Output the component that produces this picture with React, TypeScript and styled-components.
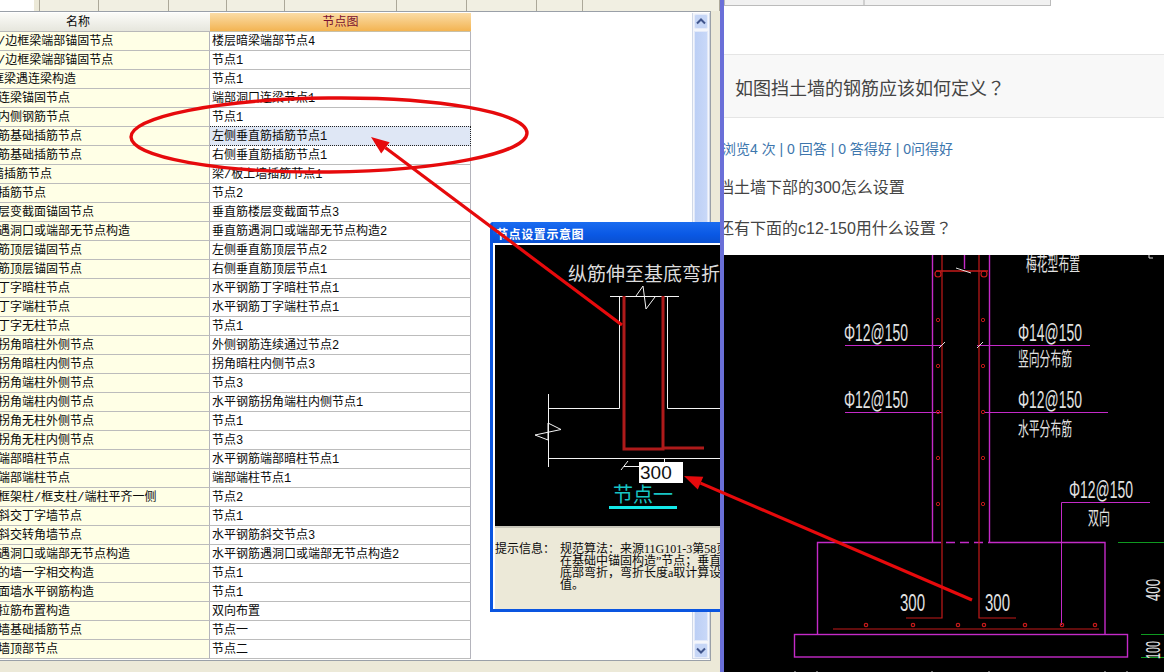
import React from "react";
import styled, { createGlobalStyle } from "styled-components";

const Global = createGlobalStyle`
  html, body { margin: 0; padding: 0; background: #fff; }
  #root { width: 1164px; height: 672px; overflow: hidden; }
  * { box-sizing: border-box; }
`;

const grid = `"Liberation Mono", "Noto Sans CJK SC", monospace`;
const cjk = `"Liberation Serif", "Noto Sans CJK SC", serif`;
const web = `"Liberation Sans", "Noto Sans CJK SC", sans-serif`;

const Page = styled.div`
  position: relative;
  display: flex;
  width: 1164px;
  height: 672px;
  overflow: hidden;
  background: #fff;
`;

const LeftPane = styled.div`
  position: relative;
  width: 720px;
  height: 672px;
  flex: none;
  overflow: hidden;
  background: #ece9d8;
  display: flex;
  flex-direction: column;
  font: 12px/19px ${grid};
  color: #0a0a0a;
`;

const TabStrip = styled.div`
  display: flex;
  height: 11px;
  flex: none;
  background: #ece9d8;
`;

const TabStub = styled.div<{ $w: number; $active?: boolean }>`
  width: ${(p) => p.$w}px;
  flex: none;
  overflow: hidden;
  border-right: 1px solid #aca899;
  background: ${(p) => (p.$active ? "linear-gradient(90deg, #fff 88%, #ece9d8 88%)" : "#f1efe2")};
`;

const TabLabel = styled.div`
  margin-top: -16px;
  line-height: 18px;
  white-space: nowrap;
  overflow: hidden;
`;

const GridFrame = styled.div`
  display: flex;
  width: 711px;
  height: 650px;
  flex: none;
  border: 1px solid #9aa0a8;
  border-left: 0;
  background: #fff;
  padding-top: 1px;
`;

const Table = styled.div`
  flex: 1;
  min-width: 0;
  display: flex;
  flex-direction: column;
`;

const Row = styled.div`
  display: flex;
  height: 19px;
  flex: none;
`;

const HeadName = styled.div`
  width: 210px;
  flex: none;
  text-align: center;
  padding-right: 54px;
  font-size: 12px;
  line-height: 20px;
  overflow: hidden;
  background: linear-gradient(#fbfbf8, #e6e6dd);
  border-bottom: 1px solid #b8b8b8;
`;

const HeadNode = styled.div`
  width: 261px;
  flex: none;
  text-align: center;
  line-height: 20px;
  overflow: hidden;
  color: #7a1030;
  background: linear-gradient(#fbdca6, #f3b452);
  border-bottom: 1px solid #c8c0a8;
`;

const NameCell = styled.div<{ $hiddenHalf?: boolean }>`
  width: 210px;
  flex: none;
  overflow: hidden;
  white-space: nowrap;
  background: #ffffe6;
  border-bottom: 1px solid #bcbcbc;
  border-right: 1px solid #b4b4bc;
  line-height: 20px;
  text-indent: ${(p) => (p.$hiddenHalf ? "-8px" : "-2px")};
`;

const NodeCell = styled.div<{ $selected?: boolean }>`
  width: 261px;
  flex: none;
  overflow: hidden;
  white-space: nowrap;
  padding-left: 2px;
  line-height: 20px;
  background: ${(p) => (p.$selected ? "#dfe7f5" : "#fff")};
  border-bottom: 1px ${(p) => (p.$selected ? "dotted #222" : "solid #bcbcbc")};
  border-right: 1px ${(p) => (p.$selected ? "dotted #222" : "solid #b4b4bc")};
  ${(p) => (p.$selected ? "border-top: 1px dotted #222; margin-top: -1px; height: 20px;" : "")}
`;

const ScrollBar = styled.div`
  width: 18px;
  flex: none;
  margin: 0 0 1px 0;
  padding: 0 1px;
  border: 1px solid #d0d8e8;
  border-top: 0;
  display: flex;
  flex-direction: column;
  gap: 2px;
  background: #f4f6fb;
  padding-top: 1px;
`;

const ScrollButton = styled.div`
  height: 15px;
  flex: none;
  display: flex;
  align-items: center;
  justify-content: center;
  background: #c6d6f6;
  border: 1px solid #e6ecfa;
  border-radius: 2px;
`;

const ScrollThumb = styled.div`
  flex: 1;
  background: linear-gradient(90deg, #bccff5, #c8d8f8);
  border: 1px solid #e2e9f9;
`;

const Dialog = styled.div`
  position: absolute;
  left: 490px;
  top: 222px;
  width: 260px;
  height: 390px;
  display: flex;
  flex-direction: column;
  background: #0a55e0;
  padding: 0 3px 3px 3px;
  border-radius: 3px 3px 0 0;
`;

const DialogTitle = styled.div`
  height: 21px;
  flex: none;
  padding: 3px 0 0 3px;
  font: bold 12px/18px "Noto Sans CJK SC", sans-serif;
  letter-spacing: 0.6px;
  color: #fff;
  background: linear-gradient(#1a6cf0, #0a58e4 60%, #0a50d0);
`;

const DialogBody = styled.div`
  flex: 1;
  display: flex;
  flex-direction: column;
  min-height: 0;
  border-left: 2px solid #fff;
  border-top: 2px solid #fff;
  background: #ece9d8;
`;

const Canvas = styled.svg`
  display: block;
  width: 250px;
  height: 281px;
  flex: none;
  background: #000;
`;

const HintPanel = styled.div`
  flex: 1;
  display: flex;
  border-top: 2px solid #c8c6ba;
  padding-top: 15px;
  font: 12px/12px ${cjk};
  color: #0a0a0a;
  white-space: nowrap;
`;

const HintLabel = styled.div`
  width: 65px;
  flex: none;
`;

const Divider = styled.div`
  width: 4px;
  flex: none;
  background: #6a6fd8;
`;

const RightPane = styled.div`
  flex: 1;
  min-width: 0;
  height: 672px;
  display: flex;
  flex-direction: column;
  overflow: hidden;
  background: #fff;
  font-family: ${web};
`;

const TopTabs = styled.div`
  display: flex;
  width: 327px;
  height: 6px;
  flex: none;
  background: #f1f1f1;
  border: 1px solid #bbb;
  border-top: 0;
`;

const TopTab = styled.div`
  width: 140px;
  flex: none;
  border-right: 2px solid #d0d0d0;
`;

const QuestionBar = styled.div`
  margin-top: 48px;
  height: 64px;
  flex: none;
  display: flex;
  align-items: center;
  padding: 2px 0 0 11px;
  background: #f8f8f8;
  border-top: 1px solid #e5e5e5;
  border-bottom: 1px solid #e5e5e5;
  font-size: 18px;
  color: #444;
`;

const FullStop = styled.span`
  font-family: "Noto Sans CJK TC", sans-serif;
  line-height: 0;
`;

const Stats = styled.div`
  margin: 22px 0 0 -2px;
  height: 18px;
  flex: none;
  font-size: 14px;
  line-height: 18px;
  color: #3d76ad;
  white-space: nowrap;
`;

const BodyText = styled.div`
  margin: 19px 0 0 -6px;
  height: 22px;
  flex: none;
  font-size: 16px;
  line-height: 22px;
  color: #444;
  white-space: nowrap;
`;

const Cad = styled.svg`
  display: block;
  margin-top: 15px;
  width: 440px;
  height: 417px;
  flex: none;
  background: #000;
`;

const Annotations = styled.svg`
  position: absolute;
  left: 0;
  top: 0;
  width: 1164px;
  height: 672px;
  pointer-events: none;
`;

const rows: [string, string, boolean?][] = [
  ["/边框梁端部锚固节点", "楼层暗梁端部节点4"],
  ["/边框梁端部锚固节点", "节点1"],
  ["框梁遇连梁构造", "节点1", true],
  ["连梁锚固节点", "端部洞口连梁节点1"],
  ["内侧钢筋节点", "节点1"],
  ["筋基础插筋节点", "左侧垂直筋插筋节点1"],
  ["筋基础插筋节点", "右侧垂直筋插筋节点1"],
  ["墙插筋节点", "梁/板上墙插筋节点1", true],
  ["插筋节点", "节点2"],
  ["层变截面锚固节点", "垂直筋楼层变截面节点3"],
  ["遇洞口或端部无节点构造", "垂直筋遇洞口或端部无节点构造2"],
  ["筋顶层锚固节点", "左侧垂直筋顶层节点2"],
  ["筋顶层锚固节点", "右侧垂直筋顶层节点1"],
  ["丁字暗柱节点", "水平钢筋丁字暗柱节点1"],
  ["丁字端柱节点", "水平钢筋丁字端柱节点1"],
  ["丁字无柱节点", "节点1"],
  ["拐角暗柱外侧节点", "外侧钢筋连续通过节点2"],
  ["拐角暗柱内侧节点", "拐角暗柱内侧节点3"],
  ["拐角端柱外侧节点", "节点3"],
  ["拐角端柱内侧节点", "水平钢筋拐角端柱内侧节点1"],
  ["拐角无柱外侧节点", "节点1"],
  ["拐角无柱内侧节点", "节点3"],
  ["端部暗柱节点", "水平钢筋端部暗柱节点1"],
  ["端部端柱节点", "端部端柱节点1"],
  ["框架柱/框支柱/端柱平齐一侧", "节点2"],
  ["斜交丁字墙节点", "节点1"],
  ["斜交转角墙节点", "水平钢筋斜交节点3"],
  ["遇洞口或端部无节点构造", "水平钢筋遇洞口或端部无节点构造2"],
  ["的墙一字相交构造", "节点1"],
  ["面墙水平钢筋构造", "节点1"],
  ["拉筋布置构造", "双向布置"],
  ["墙基础插筋节点", "节点一"],
  ["墙顶部节点", "节点二"],
];

const tabWidths = [40, 59, 70, 58, 58, 112, 70, 70, 46, 137];

const CadLabel = ({ x, y, w, size = 23, children }: { x: number; y: number; w: number; size?: number; children: string }) => (
  <text
    x={x}
    y={y}
    fill="#e2e2e2"
    fontFamily='"Liberation Sans","Noto Sans CJK SC",sans-serif'
    fontSize={size}
    textLength={w}
    lengthAdjust="spacingAndGlyphs"
  >
    {children}
  </text>
);

const WallDots = ({ x }: { x: number }) => (
  <>
    {[320, 366, 412, 458, 504].map((y) => (
      <circle key={y} cx={x} cy={y} r={1.7} fill="none" stroke="#c01818" strokeWidth={1} />
    ))}
  </>
);

const Arrow = ({ x1, y1, x2, y2 }: { x1: number; y1: number; x2: number; y2: number }) => {
  const a = Math.atan2(y2 - y1, x2 - x1);
  const len = 18;
  const wid = 7;
  const bx = x2 - Math.cos(a) * len;
  const by = y2 - Math.sin(a) * len;
  const nx = -Math.sin(a) * wid;
  const ny = Math.cos(a) * wid;
  return (
    <>
      <line x1={x1} y1={y1} x2={bx} y2={by} stroke="#e60a0c" strokeWidth={3.2} />
      <polygon points={`${x2},${y2} ${bx + nx},${by + ny} ${bx - nx},${by - ny}`} fill="#e60a0c" />
    </>
  );
};

export default function App() {
  return (
    <Page>
      <Global />
      <LeftPane>
        <TabStrip>
          {tabWidths.map((w, i) => (
            <TabStub key={i} $w={w} $active={i === 0}>
              {i === 0 && <TabLabel>墙节点</TabLabel>}
            </TabStub>
          ))}
        </TabStrip>
        <GridFrame>
          <Table>
            <Row>
              <HeadName>名称</HeadName>
              <HeadNode>节点图</HeadNode>
            </Row>
            {rows.map(([name, node, half], i) => (
              <Row key={i}>
                <NameCell $hiddenHalf={half}>{name}</NameCell>
                <NodeCell $selected={i === 5}>{node}</NodeCell>
              </Row>
            ))}
          </Table>
          <ScrollBar>
            <ScrollButton>
              <svg width="10" height="7" viewBox="0 0 10 7">
                <path d="M1 5.5 L5 1.5 L9 5.5" fill="none" stroke="#40558c" strokeWidth="2" />
              </svg>
            </ScrollButton>
            <ScrollThumb />
            <ScrollButton>
              <svg width="10" height="7" viewBox="0 0 10 7">
                <path d="M1 1.5 L5 5.5 L9 1.5" fill="none" stroke="#40558c" strokeWidth="2" />
              </svg>
            </ScrollButton>
          </ScrollBar>
        </GridFrame>

        <Dialog>
          <DialogTitle>节点设置示意图</DialogTitle>
          <DialogBody>
            <Canvas viewBox="495 245 250 281">
              <text x="568" y="281" fill="#dcdcdc" fontFamily='"Noto Sans CJK SC",sans-serif' fontSize="19">
                纵筋伸至基底弯折
              </text>
              <g fill="none" stroke="#f4f4f4" strokeWidth="1">
                <path d="M610 296.5H679" />
                <path d="M619.5 296V408.5H548.5" />
                <path d="M667.5 296V408.5H745" />
                <path d="M548.5 394V467" />
                <path d="M548 458.5H745" />
                <path d="M561 429.5L535 435L548 440V423L561 429.5" />
                <path d="M636 296L643 286L646 309L655 297" />
                <path d="M624 466.5H640M621 470L628 461M664.5 458V463" />
              </g>
              <path d="M624 296V449H663V296M663 448H704" fill="none" stroke="#ae1a1a" strokeWidth="3" />
              <rect x="639" y="462" width="44" height="21" fill="#fff" />
              <text x="640" y="479" fill="#111" fontFamily='"Liberation Sans",sans-serif' fontSize="19">
                300
              </text>
              <text x="613" y="502" fill="#18c4c4" fontFamily='"Noto Sans CJK SC",sans-serif' fontSize="20">
                节点一
              </text>
              <rect x="609" y="506" width="68" height="3" fill="#14e8e8" />
            </Canvas>
            <HintPanel>
              <HintLabel>提示信息：</HintLabel>
              <div>
                规范算法：来源11G101-3第58页
                <br />
                在基础中锚固构造”节点；垂直
                <br />
                底部弯折，弯折长度a取计算设
                <br />
                值。
              </div>
            </HintPanel>
          </DialogBody>
        </Dialog>
      </LeftPane>

      <Divider />

      <RightPane>
        <TopTabs>
          <TopTab />
        </TopTabs>
        <QuestionBar>
          <span>
            如图挡土墙的钢筋应该如何定义<FullStop>？</FullStop>
          </span>
        </QuestionBar>
        <Stats>浏览4 次 | 0 回答 | 0 答得好 | 0问得好</Stats>
        <BodyText>挡土墙下部的300怎么设置</BodyText>
        <BodyText>
          还有下面的c12-150用什么设置<FullStop>？</FullStop>
        </BodyText>
        <Cad viewBox="724 255 440 417">
          <g fill="none" stroke="#c42ac8" strokeWidth="1.4">
            <path d="M932.5 255V542M989.5 255V542" />
            <path d="M964.5 255V269" />
            <path d="M817.5 634V542.5H932M989 542.5H1105V634" />
            <path d="M932 542.5H989" strokeDasharray="9 5" />
            <rect x="794.5" y="634.5" width="333" height="22.5" />
            <path d="M845 345.5H942M977 345.5H1090" strokeWidth="1" />
            <path d="M845 412.5H942M985 412.5H1108" strokeWidth="1" />
            <path d="M1150 502.5H1061.5V625" strokeWidth="1" />
          </g>
          <g fill="none" stroke="#c41a1a" strokeWidth="1.2">
            <path d="M942 255V618H906M979 255V618H1016" />
            <path d="M936 271H988" strokeWidth="1.4" />
            <path d="M833 629H1099" />
            <circle cx="938" cy="274" r="3" />
            <circle cx="984" cy="274" r="3" />
            {[866, 913, 958, 984, 1025, 1062, 1095].map((x) => (
              <circle key={x} cx={x} cy={625} r={1.7} />
            ))}
          </g>
          <WallDots x={938} />
          <WallDots x={983} />
          <path d="M956 268L971 273M939 348L945 342M977 348L983 342" stroke="#ddd" strokeWidth="1" />
          <path d="M1118 542.5H1164M1141 634.5H1164M1141 657.5H1164" stroke="#0f9a20" strokeWidth="1.2" />
          <path d="M1149 255V258H1153" stroke="#ddd" strokeWidth="1" fill="none" />
          <path d="M795 671V672M817 671V672M932 671V672M989 671V672M1105 671V672M1127 671V672" stroke="#ccc" strokeWidth="1" />
          <CadLabel x={1026} y={271} w={54} size={19}>梅花型布置</CadLabel>
          <CadLabel x={844} y={341} w={64}>Φ12@150</CadLabel>
          <CadLabel x={1018} y={341} w={64}>Φ14@150</CadLabel>
          <CadLabel x={1018} y={366} w={54} size={19}>竖向分布筋</CadLabel>
          <CadLabel x={844} y={408} w={64}>Φ12@150</CadLabel>
          <CadLabel x={1018} y={408} w={64}>Φ12@150</CadLabel>
          <CadLabel x={1018} y={436} w={54} size={19}>水平分布筋</CadLabel>
          <CadLabel x={1069} y={498} w={64}>Φ12@150</CadLabel>
          <CadLabel x={1088} y={525} w={22} size={19}>双向</CadLabel>
          <CadLabel x={900} y={611} w={25}>300</CadLabel>
          <CadLabel x={985} y={611} w={25}>300</CadLabel>
          <g transform="translate(1160 601) rotate(-90)">
            <CadLabel x={0} y={0} w={22} size={20}>400</CadLabel>
          </g>
          <g transform="translate(1160 659) rotate(-90)">
            <CadLabel x={0} y={0} w={18} size={20}>100</CadLabel>
          </g>
        </Cad>
      </RightPane>

      <Annotations viewBox="0 0 1164 672">
        <ellipse
          cx="329"
          cy="135"
          rx="198"
          ry="37"
          fill="none"
          stroke="#e60a0c"
          strokeWidth="3.4"
          transform="rotate(-0.6 329 135)"
        />
        <Arrow x1={622} y1={325} x2={371} y2={137} />
        <Arrow x1={972} y1={600} x2={684} y2={476} />
      </Annotations>
    </Page>
  );
}
